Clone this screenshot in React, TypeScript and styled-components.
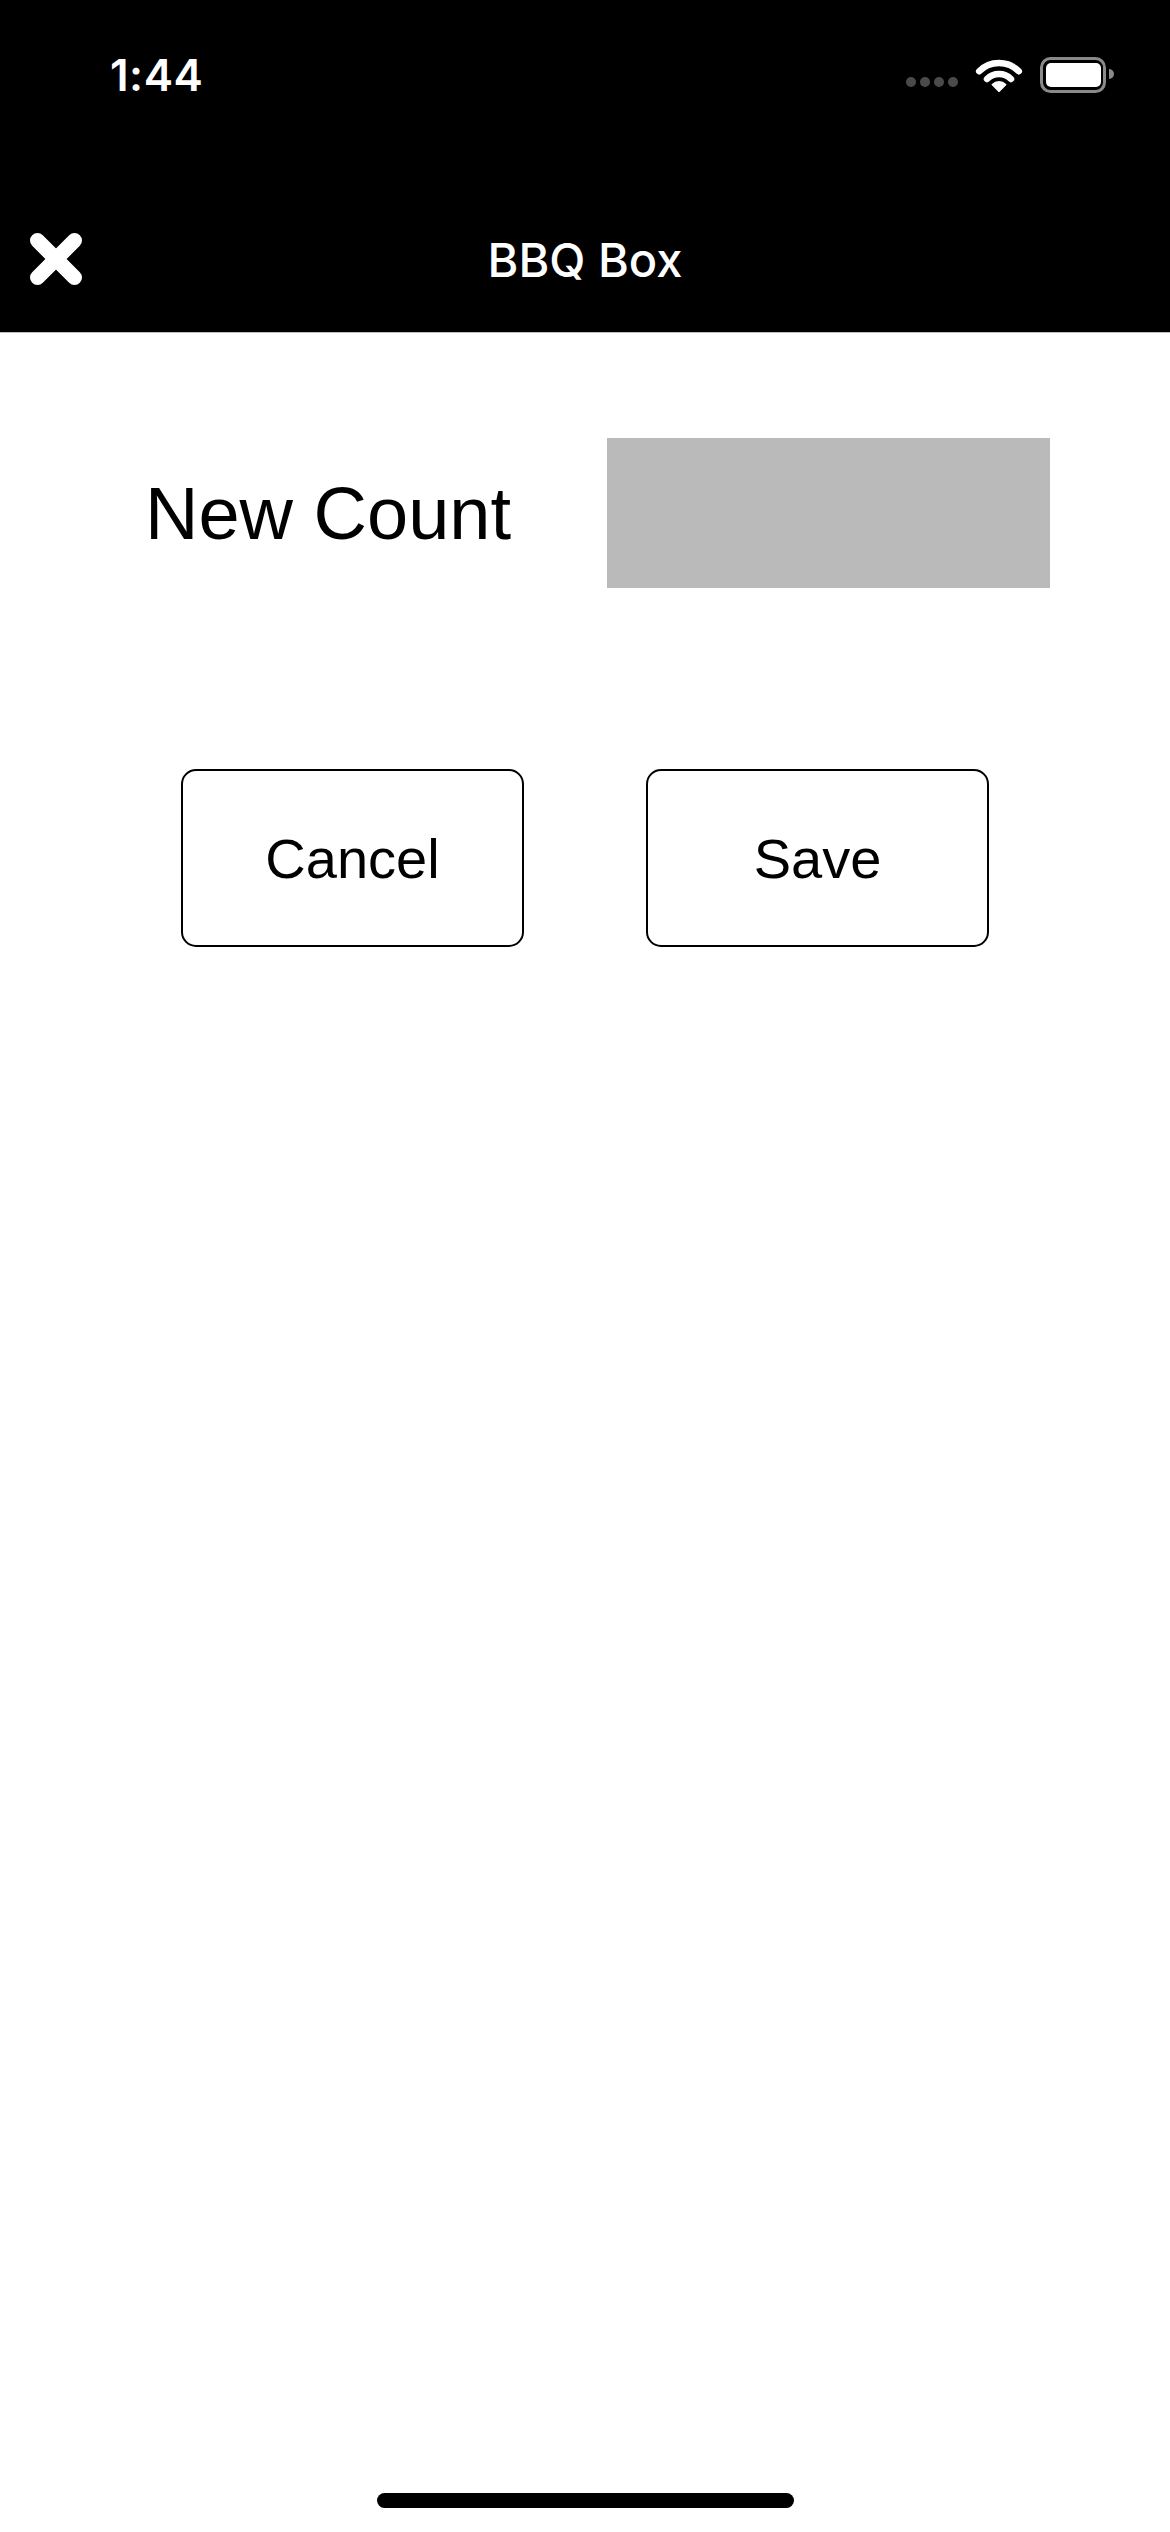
import React from "react";
import styled, { createGlobalStyle } from "styled-components";

const GlobalStyle = createGlobalStyle`
  html, body {
    margin: 0;
    padding: 0;
    background: #ffffff;
  }
  * {
    box-sizing: border-box;
  }
`;

const Screen = styled.div`
  display: flex;
  flex-direction: column;
  width: 1170px;
  min-height: 2532px;
  background: #ffffff;
`;

const Header = styled.header`
  background: #000000;
  border-bottom: 1px solid #bdbdbd;
`;

const StatusBar = styled.div`
  display: flex;
  align-items: center;
  height: 150px;
  padding: 0 55px 0 110px;
`;

const Time = styled.span`
  font-family: Inter, "Open Sans", sans-serif;
  font-weight: 600;
  font-size: 44px;
  color: #ffffff;
  letter-spacing: 0.5px;
`;

const StatusIcons = styled.div`
  display: flex;
  align-items: center;
  margin-left: auto;
  gap: 17px;
`;

const Dots = styled.div`
  display: flex;
  gap: 4px;
  margin-top: 13px;
`;

const Dot = styled.span`
  width: 10px;
  height: 10px;
  border-radius: 50%;
  background: #4a4a4a;
`;

const NavBar = styled.div`
  display: grid;
  grid-template-columns: 1fr auto 1fr;
  align-items: center;
  height: 182px;
  padding: 36px 30px 0;
`;

const CloseButton = styled.button`
  justify-self: start;
  display: flex;
  padding: 0;
  border: none;
  background: none;
  cursor: pointer;
`;

const Title = styled.h1`
  margin: 0;
  font-family: Inter, "Open Sans", sans-serif;
  font-weight: 500;
  font-size: 47px;
  color: #ffffff;
`;

const Content = styled.main`
  display: flex;
  flex-direction: column;
  padding-top: 105px;
`;

const FieldRow = styled.div`
  display: flex;
  align-items: center;
  height: 150px;
  padding: 0 120px 0 145px;
`;

const Label = styled.label`
  font-family: "Liberation Sans", Arial, sans-serif;
  font-size: 74px;
  color: #000000;
`;

const CountInput = styled.input`
  margin-left: auto;
  width: 443px;
  height: 150px;
  border: none;
  outline: none;
  background: #bababa;
  font-family: "Liberation Sans", Arial, sans-serif;
  font-size: 60px;
`;

const ButtonRow = styled.div`
  display: flex;
  justify-content: center;
  gap: 122px;
  margin-top: 181px;
`;

const ActionButton = styled.button`
  width: 343px;
  height: 178px;
  border: 2px solid #000000;
  border-radius: 15px;
  background: #ffffff;
  font-family: "Liberation Sans", Arial, sans-serif;
  font-size: 56px;
  color: #000000;
  cursor: pointer;
`;

const HomeIndicator = styled.div`
  align-self: center;
  width: 417px;
  height: 15px;
  margin: auto 0 24px;
  border-radius: 8px;
  background: #000000;
`;

const WifiIcon = () => (
  <svg width="48" height="34" viewBox="0 0 48 34">
    <g fill="none" stroke="#ffffff" strokeWidth="6.5" strokeLinecap="round">
      <path d="M4.2 13.2 A28 28 0 0 1 43.8 13.2" />
      <path d="M12 21 A17 17 0 0 1 36 21" />
    </g>
    <path d="M24 33 L17.6 26.6 A9 9 0 0 1 30.4 26.6 Z" fill="#ffffff" stroke="#ffffff" strokeWidth="2" strokeLinejoin="round" />
  </svg>
);

const BatteryIcon = () => (
  <svg width="75" height="36" viewBox="0 0 75 36">
    <rect x="1.5" y="1.5" width="63" height="33" rx="9" fill="none" stroke="#8a8a8a" strokeWidth="3" />
    <rect x="6" y="6" width="55" height="24" rx="5" fill="#ffffff" />
    <path d="M69 12 A5 5 0 0 1 69 22 Z" fill="#8a8a8a" />
  </svg>
);

const CloseIcon = () => (
  <svg width="52" height="52" viewBox="0 0 52 52">
    <g stroke="#ffffff" strokeWidth="15" strokeLinecap="round">
      <line x1="7.5" y1="7.5" x2="44.5" y2="44.5" />
      <line x1="44.5" y1="7.5" x2="7.5" y2="44.5" />
    </g>
  </svg>
);

export default function App() {
  return (
    <>
      <GlobalStyle />
      <Screen>
        <Header>
          <StatusBar>
            <Time>1:44</Time>
            <StatusIcons>
              <Dots>
                {[0, 1, 2, 3].map(i => (
                  <Dot key={i} />
                ))}
              </Dots>
              <WifiIcon />
              <BatteryIcon />
            </StatusIcons>
          </StatusBar>
          <NavBar>
            <CloseButton aria-label="Close">
              <CloseIcon />
            </CloseButton>
            <Title>BBQ Box</Title>
            <span />
          </NavBar>
        </Header>
        <Content>
          <FieldRow>
            <Label htmlFor="count">New Count</Label>
            <CountInput id="count" type="number" />
          </FieldRow>
          <ButtonRow>
            <ActionButton>Cancel</ActionButton>
            <ActionButton>Save</ActionButton>
          </ButtonRow>
        </Content>
        <HomeIndicator />
      </Screen>
    </>
  );
}
